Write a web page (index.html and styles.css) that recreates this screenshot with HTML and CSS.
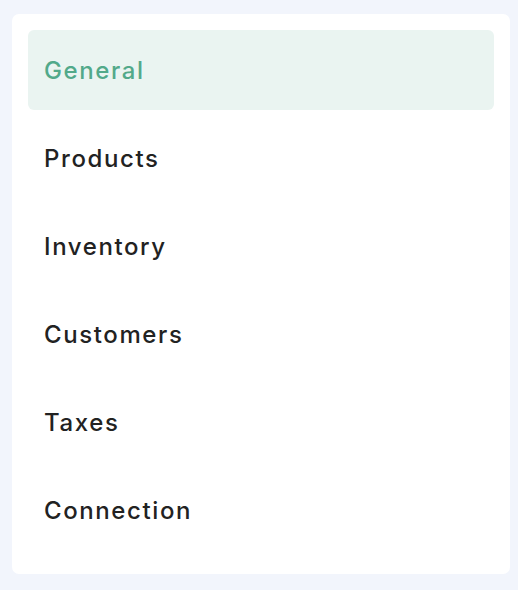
FILE: index.html
```html
<!DOCTYPE html>
<html>
<head>
<meta charset="utf-8">
<link rel="stylesheet" href="styles.css">
</head>
<body>
<nav class="card">
  <a class="item active">General</a>
  <a class="item">Products</a>
  <a class="item">Inventory</a>
  <a class="item">Customers</a>
  <a class="item">Taxes</a>
  <a class="item">Connection</a>
</nav>
</body>
</html>
```
FILE: styles.css
```css
html, body {
  margin: 0;
  padding: 0;
  background: #f2f5fc;
}
body {
  padding: 14px 8px 16px 12px;
  font-family: "Inter", "Open Sans", sans-serif;
}
.card {
  width: 498px;
  height: 560px;
  box-sizing: border-box;
  background: #ffffff;
  border-radius: 7px;
  padding: 16px 16px 24px 16px;
  display: flex;
  flex-direction: column;
  gap: 8px;
}
.item {
  height: 80px;
  display: flex;
  align-items: center;
  padding-left: 16px;
  box-sizing: border-box;
  border-radius: 6px;
  font-size: 24px;
  font-weight: 500;
  color: #222222;
  letter-spacing: 1.6px;
}
.item.active {
  background: #eaf4f1;
  color: #52a98a;
}
```
